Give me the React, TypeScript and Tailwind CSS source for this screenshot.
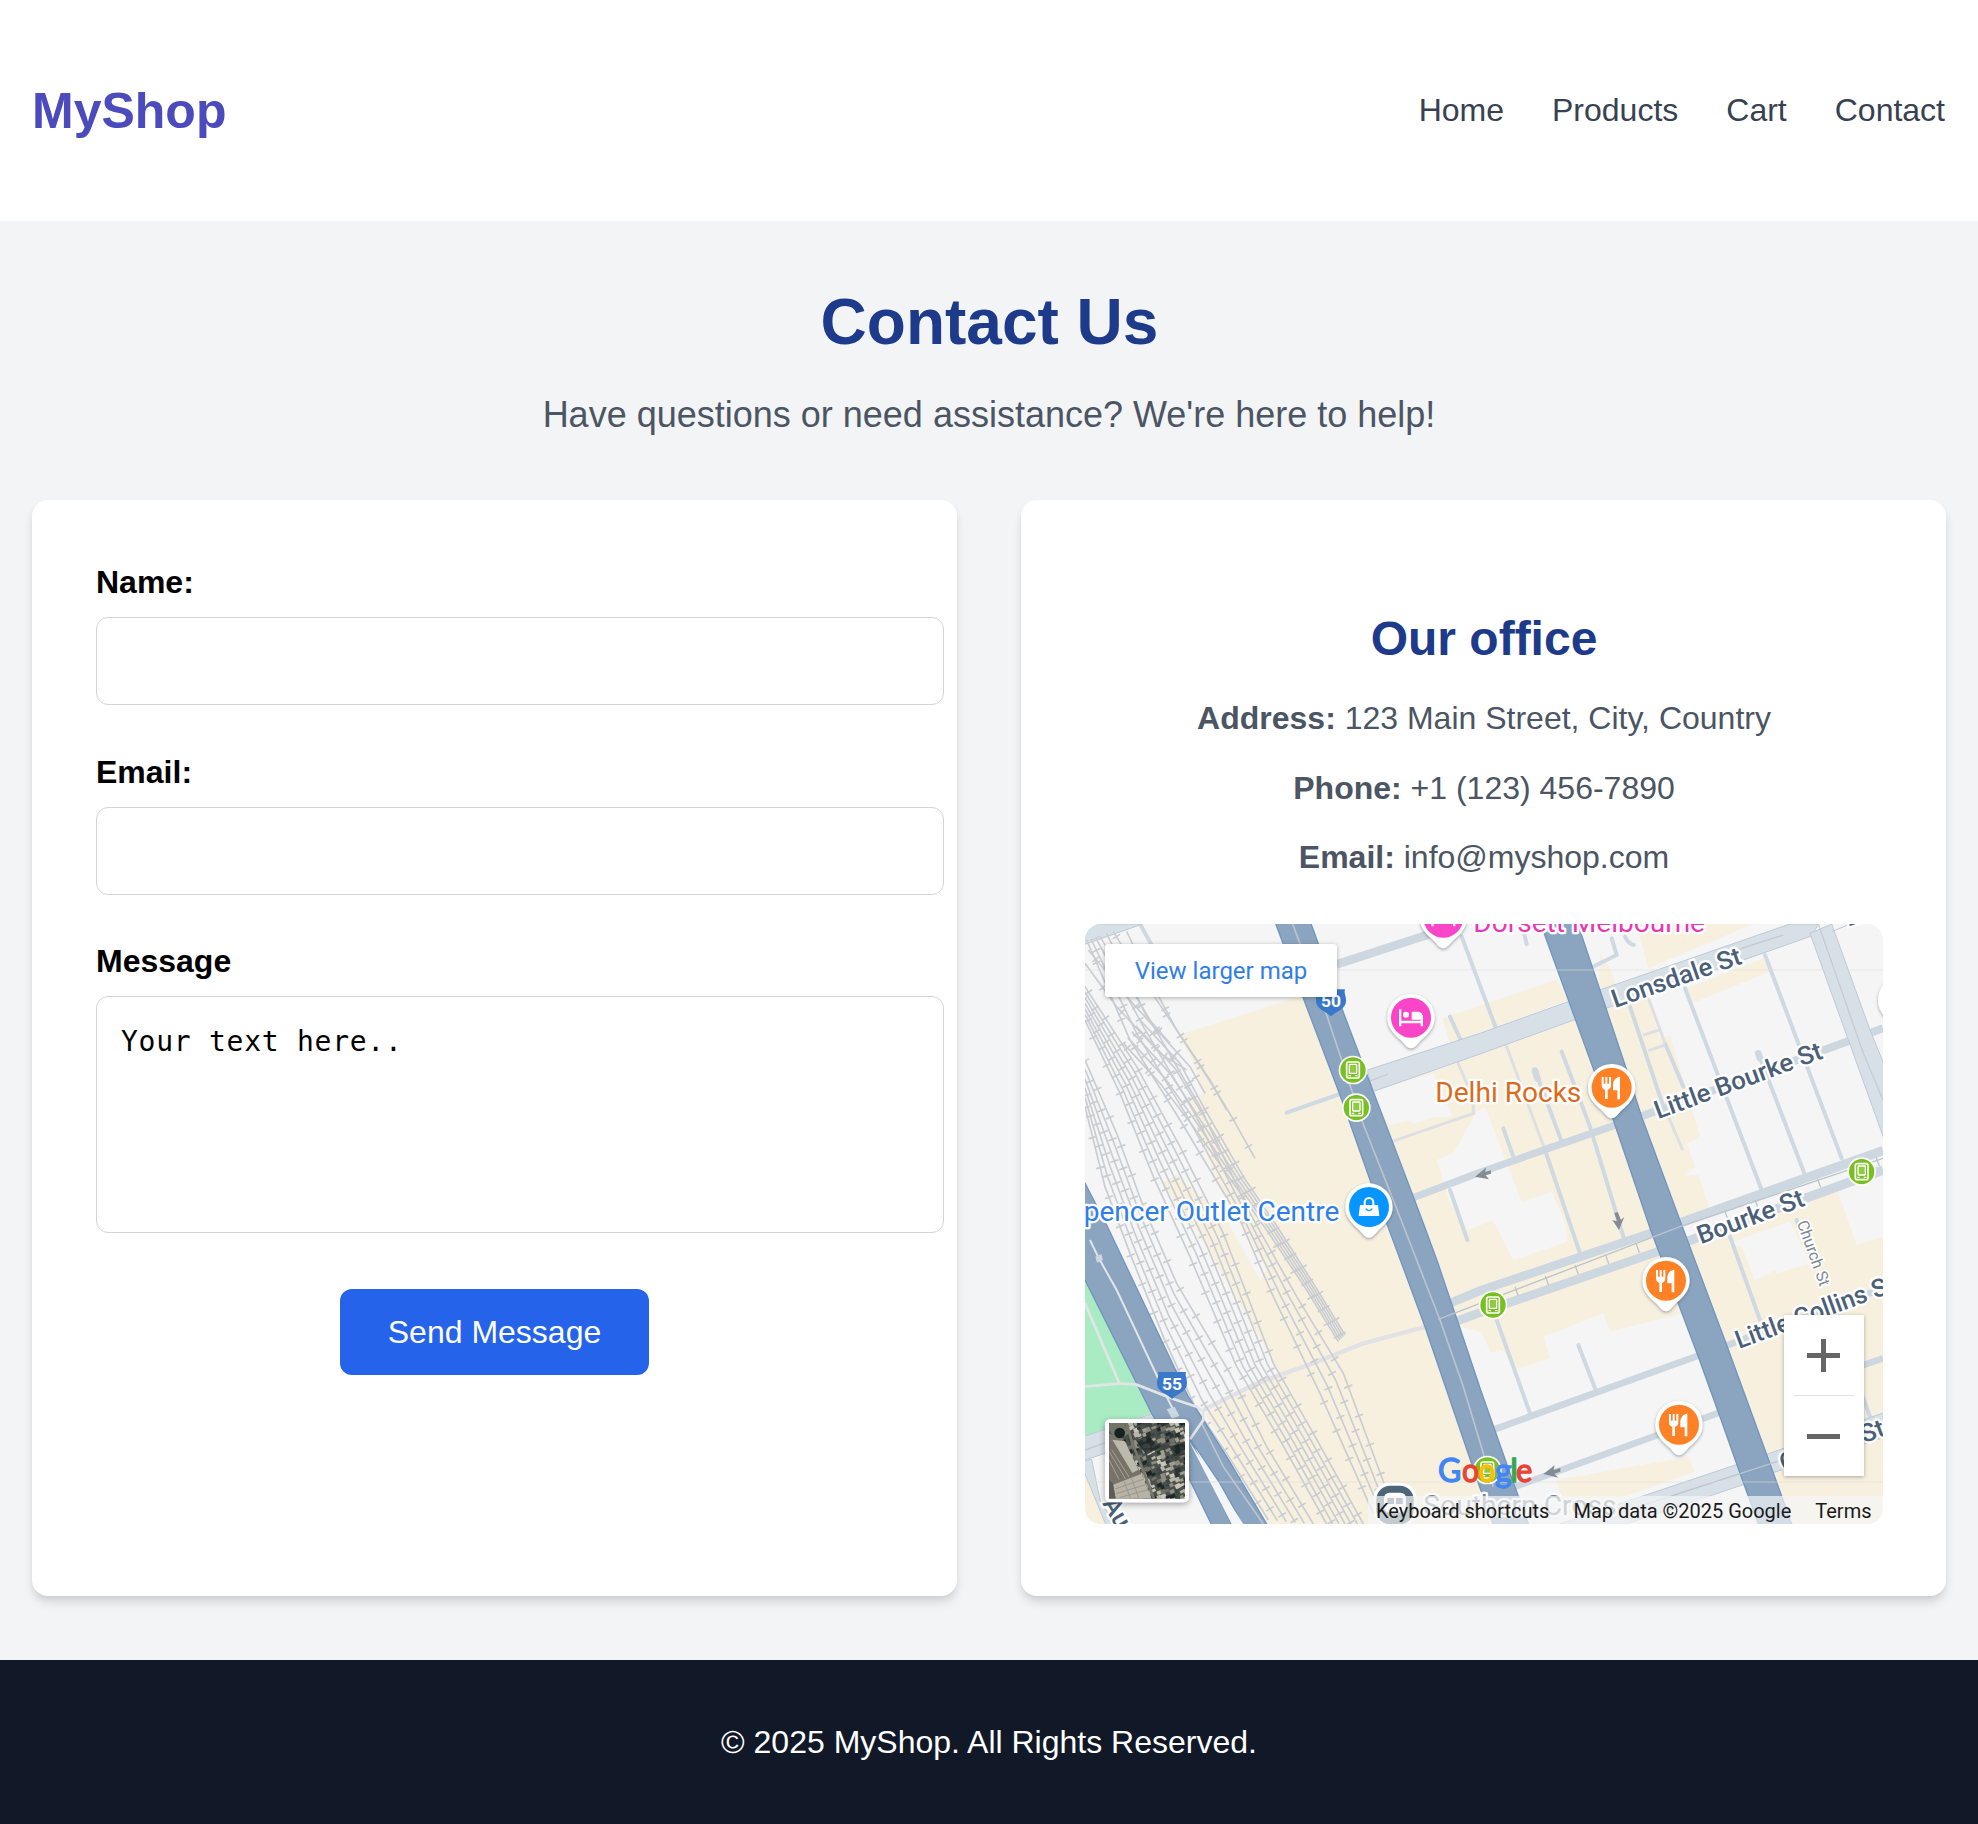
import React from "react";

type Pt = [number, number];

const toPath = (pts: Pt[]) => "M" + pts.map((p) => p.join(",")).join("L");

const mix = (a: Pt[], b: Pt[], t: number): Pt[] =>
  a.map((p, i) => [
    Math.round(p[0] + (b[i][0] - p[0]) * t),
    Math.round(p[1] + (b[i][1] - p[1]) * t),
  ]);

/* Rail yard: each bundle fans out evenly between its two outer tracks. */
const bundles: { a: Pt[]; b: Pt[]; n: number }[] = [
  { a: [[15, 560], [75, 800], [150, 1000], [250, 1250], [345, 1460], [440, 1600], [565, 1800]], b: [[15, 420], [110, 640], [190, 860], [290, 1090], [450, 1360], [560, 1580], [700, 1812]], n: 6 },
  { a: [[15, 300], [120, 520], [220, 770], [330, 1010], [470, 1340], [600, 1560], [740, 1812]], b: [[15, 200], [170, 440], [300, 680], [430, 940], [580, 1330], [700, 1540], [850, 1812]], n: 7 },
  { a: [[20, 60], [150, 360], [300, 600], [480, 900], [580, 1130], [720, 1420], [880, 1780]], b: [[60, 50], [210, 300], [360, 560], [510, 880], [650, 1130], [790, 1360], [912, 1690]], n: 4 },
  { a: [[130, 370], [240, 490], [340, 620], [460, 790], [560, 930], [680, 1110], [775, 1265]], b: [[180, 300], [300, 430], [370, 560], [490, 770], [585, 910], [700, 1090], [795, 1245]], n: 5 },
];

const looseTracks: Pt[][] = [
  [[100, 35], [180, 165], [300, 345], [400, 500], [455, 590], [525, 715]],
  [[140, 35], [220, 200], [290, 330], [390, 480], [440, 570]],
  [[25, 90], [140, 230], [330, 440], [375, 520]],
  [[15, 130], [110, 260], [240, 400], [320, 450]],
  [[80, 40], [200, 290], [270, 370]],
];

const tracks: Pt[][] = [
  ...bundles.flatMap(({ a, b, n }) => Array.from({ length: n }, (_, i) => mix(a, b, i / (n - 1)))),
  ...looseTracks,
];

const Tracks = () => (
  <g fill="none" stroke="#c9cdd2">
    {tracks.map((t, i) => (
      <g key={i}>
        <path d={toPath(t)} strokeWidth="5" />
        <path d={toPath(t)} strokeWidth="26" strokeDasharray="5 88" strokeDashoffset={(i * 37) % 92} />
      </g>
    ))}
  </g>
);

const Pin = ({ x, y, color, children }: { x: number; y: number; color: string; children?: React.ReactNode }) => (
  <g transform={`translate(${x} ${y})`}>
    <path
      d="M0,92C-12,92 -18,80 -30,68C-52,48 -71,30 -71,0A71,71 0 0 1 71,0C71,30 52,48 30,68C18,80 12,92 0,92Z"
      fill="#fff"
      filter="url(#pinShadow)"
    />
    <circle r="60" fill={color} />
    {children}
  </g>
);

const Food = () => (
  <g fill="#fff">
    <path d="M-30,-32h6v20h5v-20h6v20h5v-20h6v24c0,9 -5,13 -10,15v27h-8v-27c-5,-2 -10,-6 -10,-15z" />
    <path d="M25,-33v68h-8v-27h-13v-16c0,-14 9,-24 21,-25z" />
  </g>
);

const Bed = () => (
  <g fill="#fff">
    <path d="M-36,-25h7v34h58v-16h7v33h-7v-9h-58v9h-7z" />
    <circle cx="-15" cy="-9" r="9" />
    <path d="M2,-18h18c10,0 15,7 15,16v8h-33z" />
  </g>
);

const Tram = ({ x, y }: { x: number; y: number }) => (
  <g transform={`translate(${x} ${y})`}>
    <circle r="43" fill="#fff" />
    <circle r="38" fill="#78c01f" />
    <rect x="-19" y="-24" width="38" height="48" rx="6" fill="none" stroke="#fff" strokeWidth="5" />
    <rect x="-11" y="-17" width="22" height="27" rx="2" fill="#8fcb42" stroke="#fff" strokeWidth="4" />
    <path d="M-14,17h8M6,17h8" stroke="#fff" strokeWidth="4" />
  </g>
);

const Shield = ({ x, y, label }: { x: number; y: number; label: string }) => (
  <g transform={`translate(${x} ${y})`}>
    <path d="M-42,-38h84c-4,12 4,20 3,34c0,26 -28,30 -45,47c-17,-17 -45,-21 -45,-47c-1,-14 7,-22 3,-34z" fill="#3a79c9" />
    <text y="16" textAnchor="middle" fontSize="52" fontWeight="700" fill="#fff" textLength="60" lengthAdjust="spacingAndGlyphs">
      {label}
    </text>
  </g>
);

interface StreetProps { x: number; y: number; angle: number; len?: number; size?: number; children: string }

const Street = ({ x, y, angle, len, size = 76, children }: StreetProps) => (
  <text
    transform={`translate(${x} ${y}) rotate(${angle})`}
    fontSize={size}
    fontWeight="500"
    fill="#4b5f78"
    stroke="#fff"
    strokeWidth="14"
    strokeLinejoin="round"
    paintOrder="stroke"
    textLength={len}
    lengthAdjust="spacingAndGlyphs"
  >
    {children}
  </text>
);

const tones = ["#b9b6a6", "#8f8d80", "#2a3331", "#6f7168", "#c8c5b8", "#3c4543", "#a19e90", "#1f2827"];

const Satellite = () => (
  <g>
    <rect x="75" y="1497" width="252" height="250" rx="16" fill="#fff" filter="url(#thumbShadow)" />
    <svg x="87" y="1509" width="228" height="227" viewBox="0 0 228 227">
      <rect width="228" height="227" fill="#4a504b" />
      <g filter="url(#aerial)">
        {Array.from({ length: 210 }, (_, i) => {
          const cx = 40 + (i % 15) * 14 + ((i * 7) % 5);
          const cy = Math.floor(i / 15) * 17 + ((i * 11) % 7) - 4;
          return (
            <rect
              key={i}
              x={cx}
              y={cy}
              width={10 + ((i * 5) % 9)}
              height={8 + ((i * 3) % 9)}
              fill={tones[(i * i * 3 + i * 5 + (i >> 2)) % 8]}
              transform={`rotate(${i % 2 ? -20 : -28} ${cx} ${cy})`}
            />
          );
        })}
        <path d="M80,50L120,38L150,75L112,95Z" fill="#1d2726" opacity=".8" />
        <path d="M180,70L228,60L228,95L195,100Z" fill="#1d2726" opacity=".6" />
        <path d="M-2,30L40,45L98,155L20,190L-2,170Z" fill="#77736a" />
        <path d="M10,50L48,55L88,140L70,150Z" fill="#bdb9ac" />
        <path d="M0,85L50,168M8,80L60,162M0,110L30,170" stroke="#a5a196" strokeWidth="3" />
        <path d="M12,185L98,152L128,227L20,227Z" fill="#b7b3a6" />
        <path d="M18,198L105,168M22,212L112,184M34,223L118,200M45,175L65,227M68,166L90,227" stroke="#9a978b" strokeWidth="3" />
        <path d="M0,170L12,185L20,227L0,227Z" fill="#5f5c54" />
        <path d="M52,0L70,60L135,227" fill="none" stroke="#77766b" strokeWidth="8" />
        <path d="M0,0H48L55,36L25,48L0,24Z" fill="#6f7666" />
        <circle cx="32" cy="30" r="16" fill="#182422" />
      </g>
    </svg>
  </g>
);

const MapArt = () => (
  <svg className="block h-full w-full" viewBox="15 12 2394 1800" preserveAspectRatio="none" fontFamily="Roboto, sans-serif">
    <defs>
      <filter id="pinShadow" x="-30%" y="-30%" width="160%" height="160%">
        <feDropShadow dx="0" dy="4" stdDeviation="5" floodColor="#3c4a5a" floodOpacity="0.5" />
      </filter>
      <filter id="thumbShadow" x="-30%" y="-30%" width="160%" height="160%">
        <feDropShadow dx="0" dy="6" stdDeviation="9" floodColor="#000" floodOpacity="0.35" />
      </filter>
      <filter id="aerial" x="0" y="0" width="100%" height="100%">
        <feGaussianBlur stdDeviation="1.6" />
      </filter>
    </defs>
    <rect x="15" y="12" width="2394" height="1800" fill="#f5f5f5" />

    {/* City blocks */}
    <g fill="#f7f0df">
      <path d="M297,345L620,242L670,230L1250,1812L565,1812L375,1480L600,1360L330,900L245,790L290,765L440,900L540,1080L560,1050L400,760L322,545L370,520L340,430Z" />
      <path d="M1088,295L1430,178L1465,240L1110,372Z" />
      <path d="M880,520L1487,298L1720,930L1850,1170L1590,1235L1570,1180L1390,1250L1410,1315L1300,1350L1270,1290L1220,1300L1205,1240L1137,1220Z" />
      <path d="M1670,12L2020,12L1705,145Z" />
      <path d="M1560,100L1590,145L1610,200L1555,215Z" />
      <path d="M1570,265L1700,220L1740,355L1770,345L1860,650L1820,670L1845,740L1815,765L1855,765L1890,870L1800,905Z" />
      <path d="M1820,205L2050,115L2070,155L1840,248Z" />
      <path d="M1820,970L2409,740L2409,1812L2135,1812Z" />
      <path d="M1430,1680L1825,1610L1845,1655L1460,1790Z" />
      <path d="M15,1650L60,1730L110,1812L15,1812Z" />
    </g>
    <g fill="#f5f5f5">
      <path d="M870,520L1060,460L1118,590L1060,592L1000,612L990,600L930,615Z" />
      <path d="M1190,575L1215,560L1325,845L1415,815L1455,905L1462,965L1300,1020L1240,900L1165,930L1110,850L1070,720L1120,700Z" />
      <path d="M1140,1220L1205,1235L1235,1305L1180,1330Z" />
      <path d="M1945,970L2130,905L2190,1030L2090,1060L2085,1050L2025,1080L1985,980Z" />
      <path d="M2270,805L2409,760L2409,950L2330,975Z" />
    </g>
    <path d="M15,1080L215,1480L15,1548Z" fill="#a9ebc3" />

    {/* Lanes */}
    <g fill="none" stroke="#cfd9e2" strokeWidth="12" strokeLinecap="round">
      <path d="M180,12L218,80M620,578L780,522M1110,290L1142,360M1145,50L1250,330M1325,12L1340,72" />
      <path d="M1815,205L2045,810M2055,105L2285,715M1650,260L1760,590M1755,370L1810,500M2035,400L2175,765" />
      <path d="M1595,55L1610,105L1530,145M1635,50Q1645,72 1662,75" />
      <path d="M1395,690L1500,1000M1445,395L1530,620L1630,950M1365,450L1445,665M1270,625L1300,710M1950,950L2040,1200M1110,810L1162,960" />
      <path d="M1250,1200L1350,1480M1495,1275L1545,1405M2345,1420L2370,1490M2150,900L2160,930" />
      <path d="M2035,400L2040,415M1365,452L1372,475" strokeWidth="20" />
    </g>
    <g fill="none" stroke="#dedfe3" strokeWidth="9">
      <path d="M1132,425L1160,490L1180,560L1180,580L935,665M1278,375L1395,690M1700,220L1755,370M1690,345L1745,328M1705,392L1755,375M1765,590L1808,690" />
    </g>

    {/* Minor streets */}
    <g fill="none" stroke="#ccd7e0" strokeWidth="26">
      <path d="M770,133L1050,42L1120,12" />
      <path d="M1000,833L1200,757L1607,615" strokeWidth="22" />
      <path d="M1687,588L2300,365L2409,325" strokeWidth="24" />
      <path d="M1110,1150L1200,1112L1722,936M1120,1207L1200,1178L1742,992" />
      <path d="M1802,908L2409,692M1820,965L2409,750" strokeWidth="28" />
      <path d="M1238,1530L1857,1306M1300,1702L1918,1478M1935,1278L2409,1105M2330,1342L2409,1315" strokeWidth="20" />
    </g>

    {/* Wide light streets */}
    <g fill="#d7e0e7" stroke="#bccad6" strokeWidth="3">
      <path d="M862,450L1200,340L1470,243L1487,298L1200,402L878,515Z" />
      <path d="M1553,212L2130,12L2215,12L2195,48L1572,267Z" />
      <path d="M2190,40L2255,12L2370,330L2415,440L2415,665Z" />
      <path d="M2255,35L2310,12" />
      <path d="M5,12L188,12L5,76Z" />
      <path d="M0,1553L220,1480L240,1545L0,1625Z" />
      <path d="M0,1625L35,1618L60,1740L110,1825L80,1820Z" />
      <path d="M1975,1632L1993,1693L1600,1825L1400,1825Z" />
      <path d="M2055,1605L2420,1475L2420,1550L2072,1660Z" />
    </g>
    <g fill="none" stroke="#c3ccd5" strokeWidth="4">
      <path d="M865,485L925,462M1970,90L2110,45M2215,12L2350,400L2409,540" />
      <path d="M15,1590L225,1515" />
    </g>

    {/* Footbridge over the rail yard */}
    <path d="M370,1470L530,1390L700,1330L850,1270L1035,1221" fill="none" stroke="#e2e2e5" strokeWidth="13" />
    <Tracks />

    {/* Arterials */}
    <g fill="#8ba5c1" stroke="#7195bd" strokeWidth="4">
      <path d="M583,0L689,0L793,285L880,515L1000,830L1033,918L1074,1030L1111,1140L1139,1222L1202,1410L1290,1660L1350,1825L1244,1825L1195,1690L1035,1220L924,920L872,785L780,525L670,235Z" />
      <path d="M1376,-5L1488,-5L1640,450L1685,590L1805,915L1938,1270L2055,1590L2140,1825L2040,1825L1980,1660L1920,1490L1855,1310L1712,930L1600,600L1545,460Z" />
      <path d="M5,770L80,915L325,1430L440,1610L568,1825L495,1825L420,1690L332,1560L400,1700L460,1825L400,1825L310,1640L215,1480L5,1060Z" />
    </g>
    <path d="M325,1560L345,1590L490,1812L455,1812Z" fill="#f3f5f7" />
    <g fill="none" stroke="#bcc4cc" strokeWidth="5">
      <path d="M638,12L740,285L845,600L975,930L1080,1200L1150,1400L1240,1700" />
      <path d="M365,1510L430,1640L550,1812" />
      <path d="M1075,1198L1200,1150L1800,920L2409,715M1630,1775L2100,1622" strokeWidth="4" />
      <path d="M1305,1100l10,28M1396,1068l10,28M1485,1035l10,28M1576,1003l10,28M1668,970l10,28M1935,875l10,26M2025,840l10,26M2212,776l10,26M2388,712l10,26" strokeWidth="4" />
    </g>
    <g fill="none" stroke="#e2e5e8" strokeWidth="8">
      <path d="M30,960L55,1012L110,1110L265,1440L290,1490" strokeWidth="6" />
      <path d="M15,1400L118,1390L170,1394L280,1437L350,1460L370,1475L370,1500L330,1558M15,1150L118,1390" />
    </g>
    <path d="M46,1010l18,-8l5,18l-18,8zM260,1468l24,-8l14,28l-22,8z" fill="#ccd7e0" />

    <path d="M15,150H2409M15,1686H2409" stroke="#dcdcd8" strokeOpacity=".4" strokeWidth="4" />

    {/* One-way arrows */}
    <g fill="#838c95">
      <path d="M1185,770l34,-28l-4,14l18,-5v10l-16,5l10,12z" />
      <path d="M1617,930l-20,-30l14,4l-8,-25l10,-3l10,24l10,-10z" />
      <path d="M1390,1662l34,-26l-3,14l20,-6v11l-18,6l12,12z" />
    </g>

    {/* Street names */}
    <Street x={1605} y={264} angle={-19.2} len={407}>Lonsdale St</Street>
    <Street x={1734} y={598} angle={-20.3} len={531}>Little Bourke St</Street>
    <Street x={1862} y={973} angle={-20.3} len={337}>Bourke St</Street>
    <Street x={1977} y={1287} angle={-20.3} len={505}>Little Collins St</Street>
    <Street x={2110} y={1655} angle={-20}>C</Street>
    <Street x={2352} y={1570} angle={-20}>St</Street>
    <Street x={2305} y={20} angle={-20}>L</Street>
    <Street x={66} y={1750} angle={60}>Aurora Ln</Street>
    <text
      transform="translate(2150 908) rotate(70)"
      fontSize="48"
      fill="#7c8896"
      stroke="#fff"
      strokeWidth="10"
      paintOrder="stroke"
      textLength="206"
      lengthAdjust="spacingAndGlyphs"
    >
      Church St
    </text>

    {/* Transit stops and route shields */}
    <Tram x={819} y={450} />
    <Tram x={829} y={563} />
    <Tram x={2345} y={755} />
    <Tram x={1239} y={1155} />
    <Tram x={1222} y={1650} />
    <Shield x={753} y={246} label="50" />
    <Shield x={276} y={1394} label="55" />

    {/* Places */}
    <g fontSize="84" stroke="#fff" strokeWidth="14" strokeLinejoin="round" paintOrder="stroke">
      <text x="1180" y="35" fill="#e936b8" textLength="695" lengthAdjust="spacingAndGlyphs">Dorsett Melbourne</text>
      <text x="1066" y="545" fill="#dc6a1b" textLength="438" lengthAdjust="spacingAndGlyphs">Delhi Rocks</text>
      <text x="778" y="902" textAnchor="end" fill="#2f7de9" textLength="817" lengthAdjust="spacingAndGlyphs">Spencer Outlet Centre</text>
      <text x="1030" y="1784" fill="#72808e" textLength="580" lengthAdjust="spacingAndGlyphs">Southern Cross</text>
    </g>
    <circle cx="2466" cy="240" r="72" fill="#fff" filter="url(#pinShadow)" />
    <Pin x={1090} y={-7} color="#fb45c9"><Bed /></Pin>
    <Pin x={993} y={293} color="#fb45c9"><Bed /></Pin>
    <Pin x={1595} y={503} color="#ff8126"><Food /></Pin>
    <Pin x={1758} y={1082} color="#ff8126"><Food /></Pin>
    <Pin x={1797} y={1514} color="#ff8126"><Food /></Pin>
    <Pin x={867} y={861} color="#0796ff">
      <path d="M-27,-6h54l4,33h-62z" fill="#fff" />
      <path d="M-13,-6v-8a13,13 0 0 1 26,0v8" fill="none" stroke="#fff" strokeWidth="6" />
      <path d="M-10,5q10,12 20,0" fill="none" stroke="#0796ff" strokeWidth="4" />
    </Pin>
    <rect x="880" y="1688" width="130" height="130" rx="48" fill="#fff" />
    <rect x="889" y="1697" width="112" height="116" rx="42" fill="#4d6578" />
    <rect x="912" y="1718" width="66" height="60" rx="16" fill="#fff" />
    <path d="M922,1734h20v18h-20zM948,1734h20v18h-20z" fill="#4d6578" />

    <Satellite />

    <g fontFamily="Lato, sans-serif" fontSize="97" strokeWidth="4">
      <text x="1074" y="1685" fill="#4285f4" stroke="#4285f4" textLength="70" lengthAdjust="spacingAndGlyphs">G</text>
      <text x="1146" y="1685" fill="#ea4335" stroke="#ea4335" textLength="51" lengthAdjust="spacingAndGlyphs">o</text>
      <text x="1195" y="1685" fill="#fbbc05" stroke="#fbbc05" textLength="51" lengthAdjust="spacingAndGlyphs">o</text>
      <text x="1245" y="1685" fill="#4285f4" stroke="#4285f4" textLength="50" lengthAdjust="spacingAndGlyphs">g</text>
      <text x="1291" y="1685" fill="#34a853" stroke="#34a853">l</text>
      <text x="1308" y="1685" fill="#ea4335" stroke="#ea4335" textLength="49" lengthAdjust="spacingAndGlyphs">e</text>
    </g>
  </svg>
);

const OfficeMap = () => (
  <div className="relative mt-[49px] h-[600px] w-[798px] overflow-hidden rounded-2xl font-[Roboto,sans-serif]">
    <MapArt />
    <a className="absolute top-5 left-5 flex h-[53px] w-[232px] items-center justify-center rounded-[3px] bg-white pl-px text-2xl text-[#2f7de9] shadow-[0_1px_4px_rgba(0,0,0,0.3)]">
      View larger map
    </a>
    <div className="absolute top-[391px] left-[699px] flex h-[161px] w-20 flex-col items-center bg-white shadow-[0_1px_4px_rgba(0,0,0,0.3)]">
      <button className="flex w-full flex-1 items-center justify-center" aria-label="Zoom in">
        <svg width="33" height="33" viewBox="0 0 33 33"><path d="M14,0h5v14h14v5h-14v14h-5v-14h-14v-5h14z" fill="#666" /></svg>
      </button>
      <span className="h-px w-[60px] bg-[#e0e0e0]" />
      <button className="flex w-full flex-1 items-center justify-center" aria-label="Zoom out">
        <svg width="33" height="5" viewBox="0 0 33 5"><path d="M0,0h33v5h-33z" fill="#666" /></svg>
      </button>
    </div>
    <div className="absolute right-0 bottom-0 flex h-7 items-center gap-6 bg-[#f5f5f5]/70 pt-px pr-[11px] pl-2 text-[20px] text-[#1a1a1a]">
      <span>Keyboard shortcuts</span>
      <span>Map data ©2025 Google</span>
      <span>Terms</span>
    </div>
  </div>
);

const fieldClass = "mt-[17px] block w-[848px] rounded-xl border border-[#d1d5db] bg-white";
const cardShadow = "shadow-[0_8px_12px_-2px_rgba(0,0,0,0.1),0_4px_8px_-2px_rgba(0,0,0,0.1)]";

export default function App() {
  return (
    <div className="flex h-[1824px] w-[1978px] flex-col bg-[#f3f4f6] font-['Liberation_Sans',Arial,sans-serif] text-[32px] leading-9 text-black">
      <header className="flex h-[221px] shrink-0 items-center justify-between bg-white pr-[33px] pl-8">
        <div className="pt-px text-[50px] leading-[56px] font-bold text-[#4b4bbd]">MyShop</div>
        <nav className="flex gap-12 pb-px text-[#374151]">
          <a>Home</a>
          <a>Products</a>
          <a>Cart</a>
          <a>Contact</a>
        </nav>
      </header>

      <main className="flex flex-1 flex-col px-8 pt-[65px] pb-16">
        <h1 className="pl-px text-center text-[64px] leading-[72px] font-bold text-[#1e3a8a]">Contact Us</h1>
        <p className="mt-[37px] text-center text-[36px] leading-10 text-[#4b5563]">
          Have questions or need assistance? We're here to help!
        </p>

        <div className="mt-[65px] grid flex-1 grid-cols-2 gap-16">
          <form className={`rounded-2xl bg-white p-16 ${cardShadow}`}>
            <label className="block font-bold">Name:</label>
            <input className={`${fieldClass} h-[88px]`} />
            <label className="mt-[48.5px] block font-bold">Email:</label>
            <input className={`${fieldClass} h-[88px]`} />
            <label className="mt-[48.5px] block font-bold">Message</label>
            <textarea
              className={`${fieldClass} h-[237px] resize-none px-6 py-[26px] font-['DejaVu_Sans_Mono',monospace] text-[28px] leading-[37px] tracking-[0.74px]`}
              defaultValue="Your text here.."
            />
            <button type="button" className="mx-auto mt-14 block h-[86px] w-[309px] rounded-xl bg-[#2563eb] text-white">
              Send Message
            </button>
          </form>

          <section className={`flex flex-col items-center rounded-2xl bg-white pt-[111px] ${cardShadow}`}>
            <h2 className="pl-px text-[48px] leading-[56px] font-bold text-[#1e3a8a]">Our office</h2>
            <div className="mt-[33px] flex flex-col items-center gap-[33.5px] pl-px text-[#4b5563]">
              <p><strong>Address:</strong> 123 Main Street, City, Country</p>
              <p><strong>Phone:</strong> +1 (123) 456-7890</p>
              <p><strong>Email:</strong> info@myshop.com</p>
            </div>
            <OfficeMap />
          </section>
        </div>
      </main>

      <footer className="flex h-[164px] shrink-0 items-center justify-center bg-[#111827] text-white">
        © 2025 MyShop. All Rights Reserved.
      </footer>
    </div>
  );
}
